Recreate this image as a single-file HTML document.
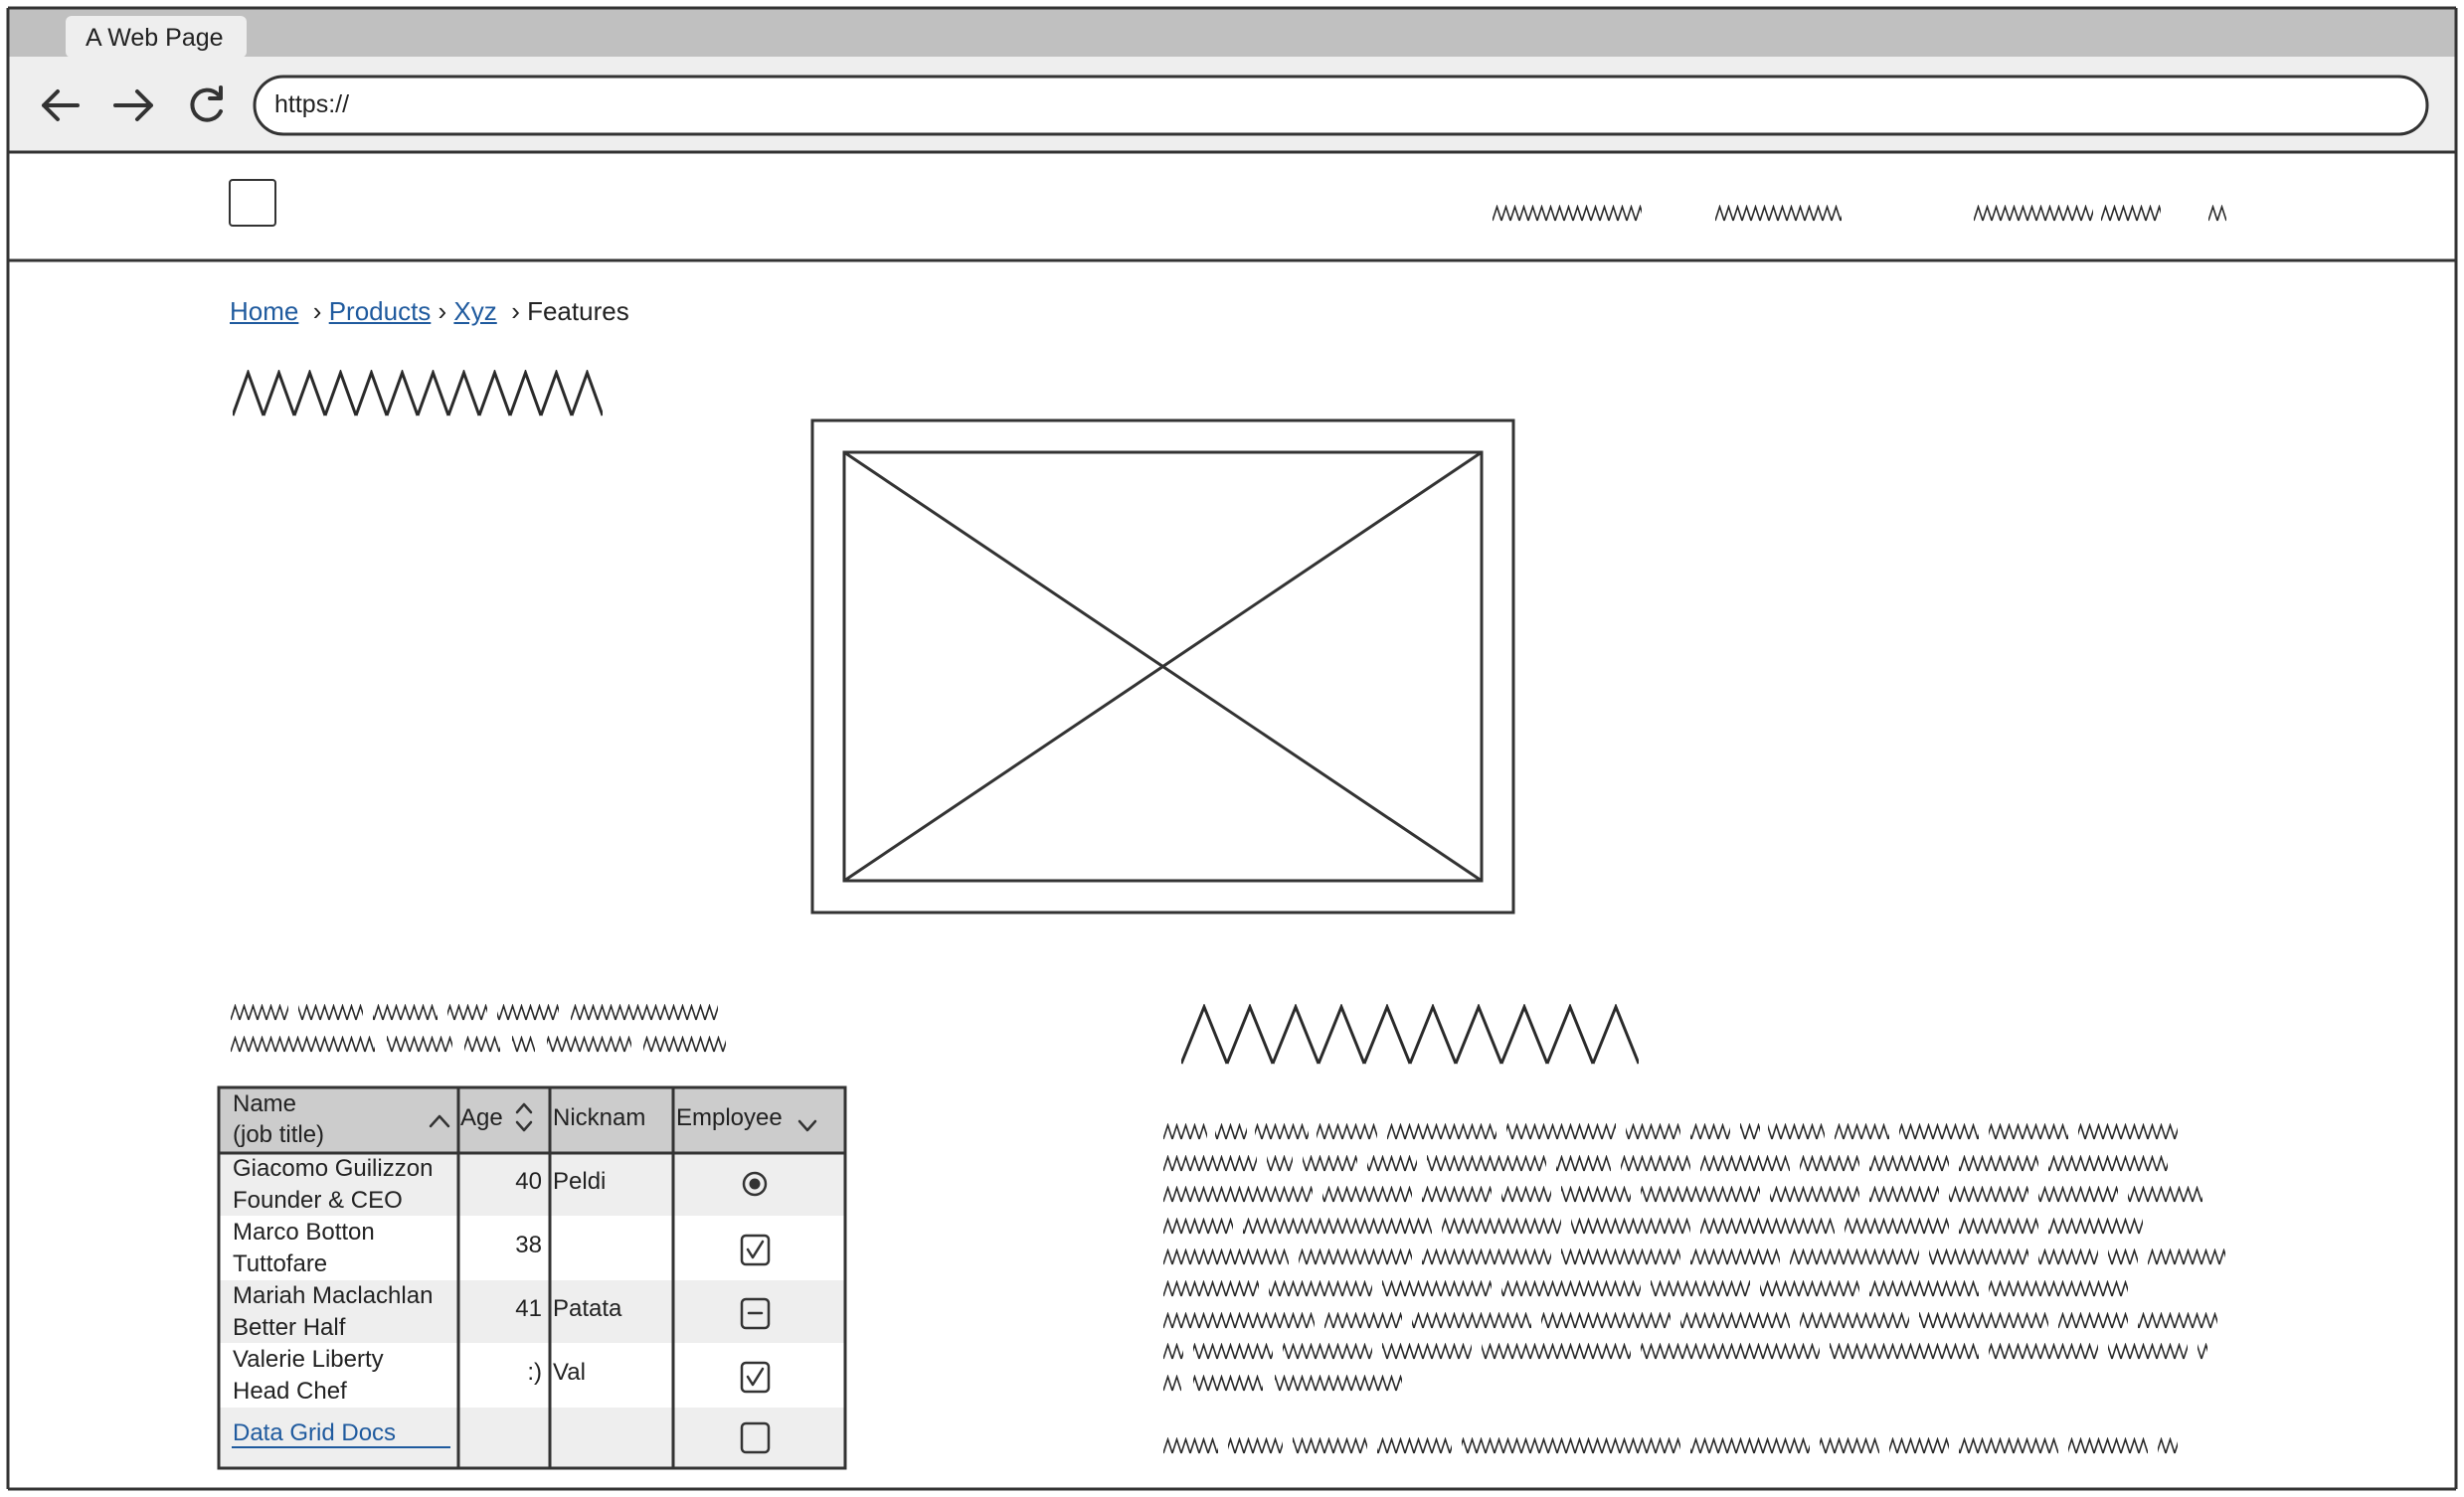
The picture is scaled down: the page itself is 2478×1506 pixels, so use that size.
<!DOCTYPE html>
<html><head><meta charset="utf-8"><style>
html,body{margin:0;padding:0;width:2478px;height:1506px;overflow:hidden;background:#fff;font-family:"Liberation Sans",sans-serif;color:#222}
.a{position:absolute}
.lnk{color:#1f5a9e;text-decoration:underline}
</style></head><body>
<svg class="a" style="left:0;top:0" width="2478" height="1506">
<defs>
<pattern id="z" width="9" height="18" patternUnits="userSpaceOnUse"><path d="M0 16 L4.5 2 L9 16" fill="none" stroke="#2a2a2a" stroke-width="1.6"/></pattern>
<pattern id="zb" width="31" height="48" patternUnits="userSpaceOnUse"><path d="M0 46 L15.5 3 L31 46" fill="none" stroke="#2a2a2a" stroke-width="3"/></pattern>
<pattern id="zc" width="46" height="62" patternUnits="userSpaceOnUse"><path d="M0 60 L23 3 L46 60" fill="none" stroke="#2a2a2a" stroke-width="3"/></pattern>
</defs>
<rect x="8" y="8" width="2462" height="50" fill="#c0c0c0"/>
<rect x="66" y="16" width="182" height="42" rx="6" fill="#eeeeee"/>
<rect x="8" y="57" width="2462" height="96" fill="#eeeeee"/>
<line x1="8" y1="8" x2="2470" y2="8" stroke="#333" stroke-width="3"/>
<line x1="8" y1="153" x2="2470" y2="153" stroke="#333" stroke-width="3"/>
<line x1="8" y1="262" x2="2470" y2="262" stroke="#333" stroke-width="3"/>
<line x1="8" y1="1498" x2="2470" y2="1498" stroke="#333" stroke-width="3"/>
<line x1="8" y1="8" x2="8" y2="1498" stroke="#333" stroke-width="3"/>
<line x1="2470" y1="8" x2="2470" y2="1498" stroke="#333" stroke-width="3"/>
<rect x="256" y="77" width="2185" height="58" rx="29" fill="#fff" stroke="#333" stroke-width="3"/>
<g fill="none" stroke="#333" stroke-width="4" stroke-linecap="round" stroke-linejoin="round">
<path d="M44 106 H78 M58 92 L44 106 L58 120"/>
<path d="M116 106 H152 M138 92 L152 106 L138 120"/>
<path d="M219 95 A15 15 0 1 0 222 112"/>
<path d="M222 88 V99 H211" />
</g>
<rect x="231" y="181" width="46" height="46" rx="3" fill="#fff" stroke="#333" stroke-width="2"/>
<g fill="url(#z)">
<rect transform="translate(1501 206)" width="150" height="18"/>
<rect transform="translate(1725 206)" width="127" height="18"/>
<rect transform="translate(1985 206)" width="120" height="18"/>
<rect transform="translate(2113 206)" width="60" height="18"/>
<rect transform="translate(2221 206)" width="18" height="18"/>
<rect transform="translate(232 1010)" width="490" height="18"/>
<rect transform="translate(232 1042)" width="498" height="18"/>
<rect transform="translate(1170 1130)" width="1020" height="18"/>
<rect transform="translate(1170 1162)" width="1010" height="18"/>
<rect transform="translate(1170 1193)" width="1045" height="18"/>
<rect transform="translate(1170 1225)" width="985" height="18"/>
<rect transform="translate(1170 1256)" width="1068" height="18"/>
<rect transform="translate(1170 1288)" width="970" height="18"/>
<rect transform="translate(1170 1320)" width="1060" height="18"/>
<rect transform="translate(1170 1351)" width="1050" height="18"/>
<rect transform="translate(1170 1383)" width="240" height="18"/>
<rect transform="translate(1170 1446)" width="1020" height="18"/>
</g>
<rect transform="translate(234 372)" width="372" height="48" fill="url(#zb)"/>
<rect transform="translate(1188 1010)" width="460" height="62" fill="url(#zc)"/>
<g fill="none" stroke="#333" stroke-width="3">
<rect x="817" y="423" width="705" height="495"/>
<rect x="849" y="455" width="641" height="431"/>
<line x1="849" y1="455" x2="1490" y2="886"/>
<line x1="1490" y1="455" x2="849" y2="886"/>
</g>
<g fill="#fff">
<rect x="1214" y="1128" width="8" height="22"/><rect x="1254" y="1128" width="8" height="22"/><rect x="1316" y="1128" width="8" height="22"/><rect x="1385" y="1128" width="10" height="22"/><rect x="1505" y="1128" width="10" height="22"/><rect x="1625" y="1128" width="10" height="22"/><rect x="1690" y="1128" width="10" height="22"/><rect x="1740" y="1128" width="10" height="22"/><rect x="1770" y="1128" width="8" height="22"/><rect x="1835" y="1128" width="10" height="22"/><rect x="1900" y="1128" width="10" height="22"/><rect x="1990" y="1128" width="10" height="22"/><rect x="2080" y="1128" width="10" height="22"/>
<rect x="1264" y="1160" width="10" height="22"/><rect x="1300" y="1160" width="10" height="22"/><rect x="1365" y="1160" width="10" height="22"/><rect x="1425" y="1160" width="10" height="22"/><rect x="1555" y="1160" width="10" height="22"/><rect x="1620" y="1160" width="10" height="22"/><rect x="1700" y="1160" width="10" height="22"/><rect x="1800" y="1160" width="10" height="22"/><rect x="1870" y="1160" width="10" height="22"/><rect x="1960" y="1160" width="10" height="22"/><rect x="2050" y="1160" width="10" height="22"/>
<rect x="1320" y="1191" width="10" height="22"/><rect x="1420" y="1191" width="10" height="22"/><rect x="1500" y="1191" width="10" height="22"/><rect x="1560" y="1191" width="10" height="22"/><rect x="1640" y="1191" width="10" height="22"/><rect x="1770" y="1191" width="10" height="22"/><rect x="1870" y="1191" width="10" height="22"/><rect x="1950" y="1191" width="10" height="22"/><rect x="2040" y="1191" width="10" height="22"/><rect x="2130" y="1191" width="10" height="22"/>
<rect x="1240" y="1223" width="10" height="22"/><rect x="1440" y="1223" width="10" height="22"/><rect x="1570" y="1223" width="10" height="22"/><rect x="1700" y="1223" width="10" height="22"/><rect x="1845" y="1223" width="10" height="22"/><rect x="1960" y="1223" width="10" height="22"/><rect x="2050" y="1223" width="10" height="22"/>
<rect x="1296" y="1254" width="10" height="22"/><rect x="1420" y="1254" width="10" height="22"/><rect x="1560" y="1254" width="10" height="22"/><rect x="1690" y="1254" width="10" height="22"/><rect x="1790" y="1254" width="10" height="22"/><rect x="1930" y="1254" width="10" height="22"/><rect x="2040" y="1254" width="10" height="22"/><rect x="2110" y="1254" width="10" height="22"/><rect x="2150" y="1254" width="10" height="22"/>
<rect x="1266" y="1286" width="10" height="22"/><rect x="1380" y="1286" width="10" height="22"/><rect x="1500" y="1286" width="10" height="22"/><rect x="1650" y="1286" width="10" height="22"/><rect x="1760" y="1286" width="10" height="22"/><rect x="1870" y="1286" width="10" height="22"/><rect x="1990" y="1286" width="10" height="22"/>
<rect x="1322" y="1318" width="10" height="22"/><rect x="1410" y="1318" width="10" height="22"/><rect x="1540" y="1318" width="10" height="22"/><rect x="1680" y="1318" width="10" height="22"/><rect x="1800" y="1318" width="10" height="22"/><rect x="1920" y="1318" width="10" height="22"/><rect x="2060" y="1318" width="10" height="22"/><rect x="2140" y="1318" width="10" height="22"/>
<rect x="1190" y="1349" width="10" height="22"/><rect x="1280" y="1349" width="10" height="22"/><rect x="1380" y="1349" width="10" height="22"/><rect x="1480" y="1349" width="10" height="22"/><rect x="1640" y="1349" width="10" height="22"/><rect x="1830" y="1349" width="10" height="22"/><rect x="1990" y="1349" width="10" height="22"/><rect x="2110" y="1349" width="10" height="22"/><rect x="2200" y="1349" width="10" height="22"/>
<rect x="1188" y="1381" width="12" height="22"/><rect x="1270" y="1381" width="12" height="22"/>
<rect x="1225" y="1444" width="10" height="22"/><rect x="1290" y="1444" width="10" height="22"/><rect x="1375" y="1444" width="10" height="22"/><rect x="1460" y="1444" width="10" height="22"/><rect x="1690" y="1444" width="10" height="22"/><rect x="1820" y="1444" width="10" height="22"/><rect x="1890" y="1444" width="10" height="22"/><rect x="1960" y="1444" width="10" height="22"/><rect x="2070" y="1444" width="10" height="22"/><rect x="2160" y="1444" width="10" height="22"/>
<rect x="290" y="1008" width="10" height="22"/><rect x="365" y="1008" width="10" height="22"/><rect x="440" y="1008" width="10" height="22"/><rect x="490" y="1008" width="10" height="22"/><rect x="562" y="1008" width="12" height="22"/>
<rect x="377" y="1040" width="12" height="22"/><rect x="455" y="1040" width="12" height="22"/><rect x="503" y="1040" width="12" height="22"/><rect x="538" y="1040" width="12" height="22"/><rect x="635" y="1040" width="12" height="22"/>
<rect x="1655" y="204" width="12" height="22"/>
</g>
<rect x="220" y="1094" width="630" height="66" fill="#cccccc"/>
<rect x="220" y="1160" width="630" height="63" fill="#eeeeee"/>
<rect x="220" y="1288" width="630" height="63" fill="#eeeeee"/>
<rect x="220" y="1416" width="630" height="61" fill="#eeeeee"/>
<g stroke="#333" stroke-width="3" fill="none">
<rect x="220" y="1094" width="630" height="383"/>
<line x1="220" y1="1160" x2="850" y2="1160"/>
<line x1="461" y1="1094" x2="461" y2="1477"/>
<line x1="553" y1="1094" x2="553" y2="1477"/>
<line x1="677" y1="1094" x2="677" y2="1477"/>
</g>
<g stroke="#333" stroke-width="2.5" fill="none" stroke-linecap="round" stroke-linejoin="round">
<path d="M433 1133 L442 1123 L451 1133"/>
<path d="M520 1119 L527 1111 L534 1119 M520 1129 L527 1137 L534 1129"/>
<path d="M804 1128 L812 1137 L820 1128"/>
<circle cx="759" cy="1191" r="11"/>
<rect x="746" y="1243" width="27" height="29" rx="4"/>
<path d="M752 1257 L757 1265 L767 1249"/>
<rect x="746" y="1307" width="27" height="29" rx="4"/>
<path d="M753 1321 H766"/>
<rect x="746" y="1371" width="27" height="29" rx="4"/>
<path d="M752 1385 L757 1393 L767 1377"/>
<rect x="746" y="1432" width="27" height="29" rx="4"/>
</g>
<circle cx="759" cy="1191" r="5.5" fill="#333"/>
<line x1="233" y1="1456" x2="453" y2="1456" stroke="#1f5a9e" stroke-width="2"/>
</svg>
<div class="a" style="left:86px;top:24px;font-size:25px">A Web Page</div>
<div class="a" style="left:276px;top:91px;font-size:25px">https://</div>
<div class="a" style="left:231px;top:298px;font-size:26px;white-space:nowrap"><span class="lnk">Home</span> &nbsp;› <span class="lnk">Products</span> › <span class="lnk">Xyz</span> &nbsp;› Features</div>
<div class="a" style="left:234px;top:1095px;font-size:24px;line-height:31px">Name<br>(job title)</div>
<div class="a" style="left:463px;top:1111px;font-size:24px">Age</div>
<div class="a" style="left:556px;top:1111px;font-size:24px">Nicknam</div>
<div class="a" style="left:680px;top:1111px;font-size:24px">Employee</div>
<div class="a" style="left:234px;top:1160px;font-size:24px;line-height:32px;white-space:nowrap">Giacomo Guilizzon<br>Founder &amp; CEO</div>
<div class="a" style="left:234px;top:1224px;font-size:24px;line-height:32px">Marco Botton<br>Tuttofare</div>
<div class="a" style="left:234px;top:1288px;font-size:24px;line-height:32px;white-space:nowrap">Mariah Maclachlan<br>Better Half</div>
<div class="a" style="left:234px;top:1352px;font-size:24px;line-height:32px">Valerie Liberty<br>Head Chef</div>
<div class="a" style="left:234px;top:1428px;font-size:24px;color:#1f5a9e">Data Grid Docs</div>
<div class="a" style="left:505px;top:1175px;width:40px;text-align:right;font-size:24px">40</div>
<div class="a" style="left:505px;top:1239px;width:40px;text-align:right;font-size:24px">38</div>
<div class="a" style="left:505px;top:1303px;width:40px;text-align:right;font-size:24px">41</div>
<div class="a" style="left:505px;top:1367px;width:40px;text-align:right;font-size:24px">:)</div>
<div class="a" style="left:556px;top:1175px;font-size:24px">Peldi</div>
<div class="a" style="left:556px;top:1303px;font-size:24px">Patata</div>
<div class="a" style="left:556px;top:1367px;font-size:24px">Val</div>
</body></html>
